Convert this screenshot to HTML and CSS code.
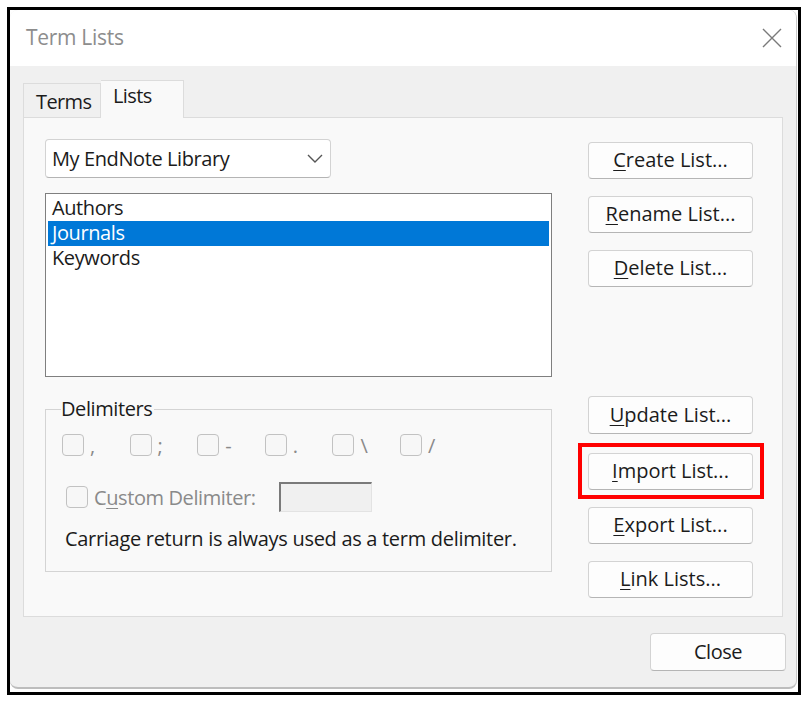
FILE: index.html
```html
<!DOCTYPE html>
<html>
<head>
<meta charset="utf-8">
<link rel="stylesheet" href="styles.css">
</head>
<body>
<div class="frame">
  <div class="dialog">
    <div class="titlebar">
      <span class="title">Term Lists</span>
      <svg class="close-x" width="20" height="20" viewBox="0 0 20 20"><path d="M1 1 L19 19 M19 1 L1 19" stroke="#7a7a7a" stroke-width="1.4" fill="none"/></svg>
    </div>
    <div class="tabs">
      <div class="tab">Terms</div>
      <div class="tab active">Lists</div>
    </div>
    <div class="panel">
      <div class="left">
        <div class="select">
          <span>My EndNote Library</span>
          <svg width="16" height="9" viewBox="0 0 16 9"><path d="M1 1 L8 8 L15 1" stroke="#555" stroke-width="1.4" fill="none"/></svg>
        </div>
        <div class="listbox">
          <div class="item">Authors</div>
          <div class="item selected">Journals</div>
          <div class="item">Keywords</div>
        </div>
        <fieldset class="group">
          <legend>Delimiters</legend>
          <div class="delims">
            <div class="delim"><span class="cb"></span><span>,</span></div>
            <div class="delim"><span class="cb"></span><span>;</span></div>
            <div class="delim"><span class="cb"></span><span>-</span></div>
            <div class="delim"><span class="cb"></span><span>.</span></div>
            <div class="delim"><span class="cb"></span><span>\</span></div>
            <div class="delim"><span class="cb"></span><span>/</span></div>
          </div>
          <div class="custom">
            <span class="cb"></span>
            <span class="custom-label">C<u>u</u>stom Delimiter:</span>
            <span class="input"></span>
          </div>
          <div class="note">Carriage return is always used as a term delimiter.</div>
        </fieldset>
      </div>
      <div class="right">
        <div class="btn"><u>C</u>reate List...</div>
        <div class="btn"><u>R</u>ename List...</div>
        <div class="btn"><u>D</u>elete List...</div>
        <div class="btn gap"><u>U</u>pdate List...</div>
        <div class="btn highlight"><u>I</u>mport List...</div>
        <div class="btn"><u>E</u>xport List...</div>
        <div class="btn"><u>L</u>ink Lists...</div>
      </div>
    </div>
    <div class="footer">
      <div class="btn close">Close</div>
    </div>
  </div>
</div>
</body>
</html>
```
FILE: styles.css
```css
* { box-sizing: border-box; }
html, body { margin: 0; padding: 0; background: #fff; }
body {
  font-family: "Open Sans", "Noto Sans", sans-serif;
  font-size: 20px;
  color: #1b1b1b;
  width: 810px;
  height: 704px;
  overflow: hidden;
}
u { text-decoration-thickness: 1px; text-underline-offset: 3px; }

.frame {
  margin: 7px 0 0 7px;
  width: 794px;
  height: 688px;
  border: 3px solid #000;
  background: #fff;
}
.dialog {
  width: 787px;
  height: 679px;
  background: #f0f0f0;
  border-radius: 8px;
  border-right: 1px solid #c9c9c9;
  border-bottom: 2px solid #bdbdbd;
  overflow: hidden;
  display: flex;
  flex-direction: column;
}
.titlebar {
  height: 56px;
  background: #fff;
  display: flex;
  align-items: center;
  justify-content: space-between;
  padding: 0 14px 2px 16px;
  flex-shrink: 0;
}
.title {
  font-size: 21px;
  color: #8d8d8d;
  letter-spacing: -0.3px;
}
.close-x { margin-top: 2px; }

.tabs {
  display: flex;
  align-items: flex-end;
  margin: 14px 0 0 13px;
  height: 37px;
  position: relative;
  z-index: 1;
}
.tab {
  height: 34px;
  width: 78px;
  border: 1px solid #dcdcdc;
  border-bottom: none;
  background: #f0f0f0;
  display: flex;
  align-items: center;
  padding: 2px 0 0 12px;
  letter-spacing: -0.6px;
}
.tab.active {
  height: 38px;
  margin-bottom: -1px;
  width: 83px;
  background: #f9f9f9;
  border-left: none;
  padding: 0 0 8px 12px;
}

.panel {
  margin-left: 13px;
  width: 760px;
  height: 500px;
  background: #f9f9f9;
  border: 1px solid #dcdcdc;
  display: grid;
  grid-template-columns: 507px 165px;
  column-gap: 36px;
  padding: 21px 0 0 21px;
  flex-shrink: 0;
}
.left { display: flex; flex-direction: column; }
.select {
  width: 286px;
  height: 39px;
  background: #fff;
  border: 1px solid #d3d3d3;
  border-bottom-color: #b4b4b4;
  border-radius: 4px;
  display: flex;
  align-items: center;
  justify-content: space-between;
  padding: 0 7px 0 6px;
  letter-spacing: -0.4px;
}
.listbox {
  margin-top: 15px;
  height: 184px;
  background: #fff;
  border: 1px solid #7f7f7f;
  padding: 2px;
}
.item {
  height: 25px;
  line-height: 24px;
  padding-left: 4px;
  letter-spacing: -0.4px;
}
.item.selected { background: #0078d7; color: #fff; }

.group {
  margin: 19px 0 0 0;
  padding: 0 0 0 16px;
  border: 1px solid #d4d4d4;
  height: 176px;
  min-width: 0;
}
.group legend {
  padding: 0 2px 0 0;
  margin-left: -1px;
  line-height: 26px;
  letter-spacing: -0.4px;
}
.delims {
  display: flex;
  margin-top: 11px;
  height: 24px;
  align-items: center;
}
.delim {
  width: 67.6px;
  display: flex;
  align-items: center;
  gap: 6px;
  color: #8a8a8a;
  font-size: 20px;
}
.cb {
  display: inline-block;
  width: 22px;
  height: 22px;
  border: 1px solid #c2c2c2;
  border-radius: 4px;
  background: #f7f7f7;
  flex-shrink: 0;
}
.custom {
  display: flex;
  align-items: center;
  margin: 25px 0 0 4px;
  height: 30px;
}
.custom-label {
  flex: 0 0 185px;
  color: #8a8a8a;
  margin-left: 6px;
  letter-spacing: -0.4px;
}
.input {
  width: 93px;
  height: 30px;
  background: #f0f0f0;
  border-top: 2px solid #7a7a7a;
  border-left: 2px solid #7a7a7a;
  border-right: 1px solid #e3e3e3;
  border-bottom: 1px solid #e3e3e3;
}
.note {
  margin: 14px 0 0 3px;
  line-height: 26px;
  letter-spacing: -0.3px;
}

.right {
  display: flex;
  flex-direction: column;
  gap: 17px;
  padding-top: 3px;
}
.btn {
  height: 37px;
  background: #fdfdfd;
  border: 1px solid #d3d3d3;
  border-bottom-color: #b5b5b5;
  border-radius: 4px;
  display: flex;
  align-items: center;
  justify-content: center;
  padding-bottom: 2px;
  position: relative;
}
.btn.gap { margin-top: 92px; height: 38px; }
.btn.highlight { margin-top: 2px; }
.btn.highlight::after {
  content: "";
  position: absolute;
  left: -11px;
  right: -12px;
  top: -11px;
  bottom: -10px;
  border: 4px solid #ff0000;
}
.footer {
  display: flex;
  justify-content: flex-end;
  padding: 16px 10px 0 0;
}
.btn.close {
  width: 136px;
  height: 38px;
  letter-spacing: -0.5px;
}
```
